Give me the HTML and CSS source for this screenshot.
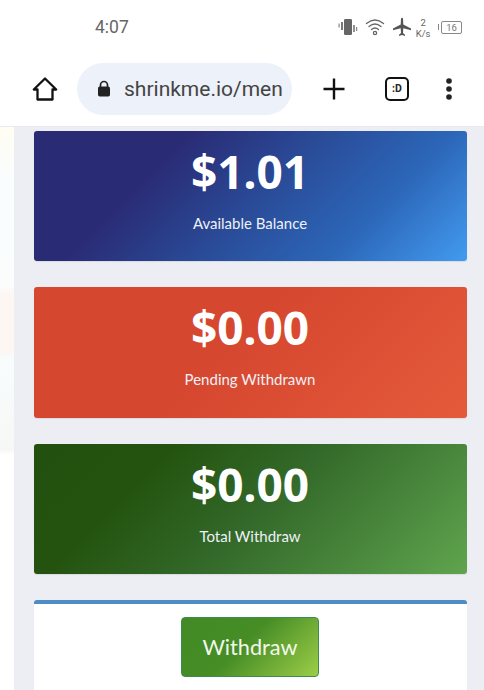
FILE: index.html
```html
<!DOCTYPE html>
<html lang="en">
<head>
<meta charset="utf-8">
<title>ShrinkMe balance</title>
<link rel="stylesheet" href="styles.css">
</head>
<body>
<div class="screen">
  <header class="status">
    <span class="time">4:07</span>
    <div class="status-icons">
      <svg class="ic-vib" viewBox="0 0 20 16" width="20" height="16"><rect x="6" y="0" width="8" height="16" rx="1.2" fill="#666"/><rect x="3" y="3" width="2" height="8" fill="#777"/><rect x="0.5" y="4.5" width="1.2" height="4" fill="#888"/><rect x="15.2" y="6" width="1.6" height="7" fill="#777"/><rect x="18" y="8" width="1.2" height="4" fill="#888"/></svg>
      <svg class="ic-wifi" viewBox="0 0 20 18" width="20" height="18" fill="none" stroke="#666" stroke-width="1.3" stroke-linecap="round"><path d="M1.5 5.5Q10-1.5 18.500 5.500"/><path d="M4 8.500Q10 3.500 16 8.500"/><path d="M6.500 11.500Q10 8.500 13.500 11.500"/><circle cx="10" cy="15" r="1.600"/></svg>
      <svg class="ic-plane" viewBox="0 0 20 20" width="20" height="20"><path d="M9 1.500Q10 0 11 1.500L11.300 7.500 19 11.500V13.300L11.300 11.300 11 16 13 17.800V19L10 18 7 19V17.800L9 16 8.700 11.300 1 13.300V11.500L8.700 7.500Z" fill="#555"/></svg>
      <div class="speed"><span>2</span><span>K/s</span></div>
      <div class="battery"><span class="battery-body">16</span></div>
    </div>
  </header>
  <nav class="toolbar">
    <svg class="ic-home" viewBox="0 0 26 26" width="26" height="26" fill="none" stroke="#111" stroke-width="2.300" stroke-linejoin="round"><path d="M13 2.500 1.800 13.500H5.500V23.500H20.500V13.500H24.200Z"/></svg>
    <div class="omnibox">
      <svg class="ic-lock" viewBox="0 0 16 18" width="16" height="18"><path d="M4.500 7V5a3.500 3.500 0 0 1 7 0v2" fill="none" stroke="#222" stroke-width="1.700"/><rect x="2" y="6.500" width="12" height="10" rx="1.800" fill="#222"/></svg>
      <span class="url">shrinkme.io/men</span>
    </div>
    <svg class="ic-plus" viewBox="0 0 24 24" width="24" height="24"><path d="M12 1.500V22.500M1.500 12H22.500" stroke="#111" stroke-width="2.400"/></svg>
    <div class="tabs">:D</div>
    <svg class="ic-menu" viewBox="0 0 8 24" width="8" height="24"><circle cx="4" cy="4" r="2.800" fill="#222"/><circle cx="4" cy="12" r="2.800" fill="#222"/><circle cx="4" cy="20" r="2.800" fill="#222"/></svg>
  </nav>
  <main class="page">
    <section class="stat stat-blue"><div class="amount">$1.01</div><div class="label">Available Balance</div></section>
    <section class="stat stat-red"><div class="amount">$0.00</div><div class="label">Pending Withdrawn</div></section>
    <section class="stat stat-green"><div class="amount">$0.00</div><div class="label">Total Withdraw</div></section>
    <section class="panel"><button class="withdraw" type="button">Withdraw</button></section>
  </main>
</div>
</body>
</html>
```
FILE: styles.css
```css
* { box-sizing: border-box; }
html, body { margin: 0; padding: 0; }
body {
  width: 484px;
  height: 690px;
  overflow: hidden;
  background: #fff;
  font-family: "Lato", "Open Sans", sans-serif;
}
.screen { display: flex; flex-direction: column; height: 690px; overflow: hidden;
  background: linear-gradient(#fff 80px, #fffcf0 85px, #fffdf4 135px, #f9fdfd 180px, #fbfdfd 285px, #fdf6f3 295px, #fdf6f3 350px, #f8fcfd 360px, #f7f8f6 450px, #fff 455px);
}
.status {
  height: 55px;
  flex: none;
  display: flex;
  justify-content: space-between;
  align-items: center;
  background: #fff;
  padding: 0 22px 1px 95px;
}
.time { font-family: "Roboto", sans-serif; font-size: 17.500px; color: #666; }
.status-icons { display: flex; align-items: center; }
.ic-vib { margin-right: 7px; }
.ic-wifi { margin-right: 7px; }
.ic-plane { margin-right: 4px; }
.speed { display: flex; flex-direction: column; align-items: center; font-family: "Roboto", sans-serif; font-size: 9.500px; line-height: 11px; color: #666; margin-right: 7px; margin-top: 1px; }
.battery { display: flex; align-items: center; }
.battery::before { content: ""; width: 1.500px; height: 6px; background: #888; margin-right: 2px; }
.battery-body { width: 21px; height: 13px; border: 1px solid #888; border-radius: 2px; font-family: "Roboto", sans-serif; font-size: 9.500px; line-height: 11px; text-align: center; color: #777; }
.toolbar {
  height: 72px;
  flex: none;
  display: flex;
  align-items: center;
  background: #fff;
  padding: 0 0 3px 32px;
  border-bottom: 1px solid #e9eaee;
}
.toolbar > * { flex: none; }
.omnibox {
  width: 215px;
  height: 52px;
  margin-left: 19px;
  border-radius: 26px;
  background: #edf1f9;
  display: flex;
  align-items: center;
  padding-left: 19px;
}
.url { margin-left: 12px; font-family: "Roboto", sans-serif; font-size: 21px; color: #444; white-space: nowrap; }
.ic-plus { margin-left: 30px; }
.tabs {
  width: 24px;
  height: 24px;
  margin-left: 39px;
  border: 2.200px solid #111;
  border-radius: 5px;
  font-family: "Roboto", sans-serif;
  font-size: 10.500px;
  font-weight: 700;
  line-height: 20px;
  text-align: center;
  color: #222;
}
.ic-menu { margin-left: 36px; }
.page {
  flex: 1;
  margin-left: 14px;
  background: #eceef3;
  padding: 4px 17.500px 0 19.500px;
  display: flex;
  flex-direction: column;
  gap: 26px;
}
.stat {
  height: 130.300px;
  flex: none;
  border-radius: 3px;
  color: #fff;
  text-align: center;
  padding-top: 10px;
  box-shadow: 0 1px 1px rgba(0,0,0,.08);
}
.stat-blue { background: linear-gradient(135deg, #2a2b75 0, #2a2b75 28%, #2a4f9c 55%, #2c66b8 75%, #429bf0 100%); }
.stat-red { background: linear-gradient(135deg, #d6472f 0, #d6472f 45%, #e55a3b 100%); }
.stat-green { background: linear-gradient(135deg, #22500f 0, #24530f 25%, #33692a 52%, #5fa44e 100%); }
.amount { font-family: "Noto Sans", sans-serif; font-size: 46px; font-weight: 700; line-height: 60px; }
.label { font-size: 15px; line-height: 20px; margin-top: 12px; color: #eef1f7; }
.panel {
  flex: 1;
  border-top: 4px solid #4d8cc4;
  border-radius: 3px 3px 0 0;
  background: #fff;
  text-align: center;
  padding-top: 13px;
}
.withdraw {
  width: 138px;
  height: 60px;
  border: 1px solid #3f8a50;
  border-radius: 4px;
  background: linear-gradient(135deg, #418a25 0, #468d26 45%, #9ccd48 100%);
  color: #f2f8ea;
  font-family: "Lato", sans-serif;
  font-size: 21.700px;
  padding: 0;
}
```
